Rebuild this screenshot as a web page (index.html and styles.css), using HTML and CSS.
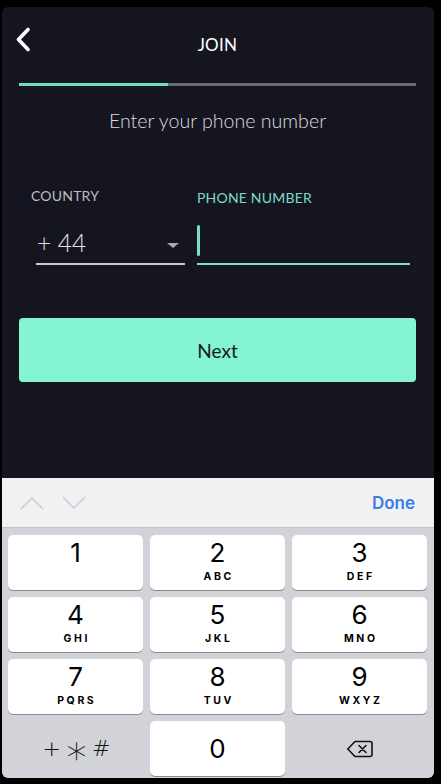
FILE: index.html
```html
<!DOCTYPE html>
<html>
<head>
<meta charset="utf-8">
<link rel="stylesheet" href="styles.css">
</head>
<body>
<div class="screen">
  <div class="content">
    <header class="header">
      <button class="back" aria-label="Back">
        <svg width="16" height="26" viewBox="0 0 16 26"><polyline points="12,2.5 2.5,12.5 12,22.5" fill="none" stroke="#fff" stroke-width="3.6" stroke-linecap="round" stroke-linejoin="round"/></svg>
      </button>
      <h1 class="title">JOIN</h1>
    </header>
    <div class="progress"><div class="progress-fill"></div></div>
    <p class="subtitle">Enter your phone number</p>
    <div class="fields">
      <div class="field country">
        <div class="label">COUNTRY</div>
        <div class="input country-input">
          <span class="code">+ 44</span>
          <span class="caret-down"></span>
        </div>
      </div>
      <div class="field phone">
        <div class="label active">PHONE NUMBER</div>
        <div class="input phone-input"><span class="cursor"></span></div>
      </div>
    </div>
    <button class="next">Next</button>
  </div>
  <div class="keyboard">
    <div class="accessory">
      <div class="arrows">
        <svg width="24" height="14" viewBox="0 0 24 14"><polyline points="1,13 12,2 23,13" fill="none" stroke="#c9c9ce" stroke-width="1.4"/></svg>
        <svg width="24" height="14" viewBox="0 0 24 14"><polyline points="1,1 12,12 23,1" fill="none" stroke="#c9c9ce" stroke-width="1.4"/></svg>
      </div>
      <span class="done">Done</span>
    </div>
    <div class="keypad">
      <div class="key"><span class="digit">1</span><span class="letters">&nbsp;</span></div>
      <div class="key"><span class="digit">2</span><span class="letters">ABC</span></div>
      <div class="key"><span class="digit">3</span><span class="letters">DEF</span></div>
      <div class="key"><span class="digit">4</span><span class="letters">GHI</span></div>
      <div class="key"><span class="digit">5</span><span class="letters">JKL</span></div>
      <div class="key"><span class="digit">6</span><span class="letters">MNO</span></div>
      <div class="key"><span class="digit">7</span><span class="letters">PQRS</span></div>
      <div class="key"><span class="digit">8</span><span class="letters">TUV</span></div>
      <div class="key"><span class="digit">9</span><span class="letters">WXYZ</span></div>
      <div class="key plain"><span class="symbols"><span>+</span><span class="star">∗</span><span>#</span></span></div>
      <div class="key zero"><span class="digit">0</span></div>
      <div class="key plain">
        <svg width="28" height="20" viewBox="0 0 28 20"><path d="M9 2.5 H24 a2 2 0 0 1 2 2 V15.5 a2 2 0 0 1 -2 2 H9 L1.8 10 Z" fill="none" stroke="#111" stroke-width="1.6" stroke-linejoin="round"/><path d="M13 6.5 L20 13.5 M20 6.5 L13 13.5" stroke="#111" stroke-width="1.6" stroke-linecap="round"/></svg>
      </div>
    </div>
  </div>
</div>
</body>
</html>
```

FILE: styles.css
```css
* { box-sizing: border-box; }
html, body { margin: 0; padding: 0; background: #000; }
body { width: 441px; height: 784px; overflow: hidden; }

.screen {
  margin: 7px 7px 0 2px;
  width: 432px;
  height: 771px;
  background: #151520;
  border-radius: 6px;
  overflow: hidden;
  display: flex;
  flex-direction: column;
  font-family: Lato, "Open Sans", sans-serif;
}

.content { padding: 0 18px 0 17px; display: flex; flex-direction: column; }

.header {
  position: relative;
  height: 75px;
  display: flex;
  align-items: center;
  justify-content: center;
}
.back {
  position: absolute;
  left: -3px;
  top: 20px;
  background: none;
  border: 0;
  padding: 0;
  width: 16px;
  height: 26px;
}
.back svg { display: block; }
.title {
  margin: 0;
  color: #fff;
  font-size: 17px;
  font-weight: 400;
  letter-spacing: 0.3px;
}

.progress { height: 3px; background: #6b6b72; margin-top: 1px; }
.progress-fill { width: 149px; height: 3px; background: #73dcc4; }

.subtitle {
  margin: 23px 0 0;
  text-align: center;
  color: #dcdce0;
  font-size: 19.6px;
  font-weight: 300;
  line-height: 24px;
}

.fields {
  margin-top: 54px;
  display: grid;
  grid-template-columns: 154px 213px;
  column-gap: 12px;
  padding-left: 12px;
}
.label {
  font-size: 14px;
  line-height: 18px;
  color: #bdbdc2;
  letter-spacing: 0.2px;
}
.label.active { color: #7ddcc6; margin-top: 2px; }
.input {
  margin-top: 18px;
  height: 42px;
  border-bottom: 2px solid #c8c8cc;
  display: flex;
  align-items: center;
}
.country-input { margin-left: 5px; width: 149px; justify-content: space-between; padding-right: 6px; }
.phone .input { margin-top: 16px; border-bottom-color: #7ddcc6; }
.code {
  color: #e4e4e8;
  font-size: 24.5px;
  font-weight: 300;
  margin-left: 1px;
  margin-top: -2px;
}
.caret-down {
  width: 0; height: 0;
  border-left: 6px solid transparent;
  border-right: 6px solid transparent;
  border-top: 5px solid #a9a9ae;
  margin-top: 4px;
}
.cursor {
  width: 3px;
  height: 31px;
  border-radius: 2px;
  background: #7ddcc6;
  margin-top: -5px;
}

.next {
  margin-top: 53px;
  height: 64px;
  border: 0;
  border-radius: 4px;
  background: #84f4d3;
  color: #17181f;
  font-family: Lato, "Open Sans", sans-serif;
  font-size: 19px;
  font-weight: 400;
}

.keyboard { margin-top: auto; height: 300px; display: flex; flex-direction: column; }
.accessory {
  height: 50px;
  background: #f1f1f3;
  display: flex;
  align-items: center;
  justify-content: space-between;
  padding: 0 19px 0 18px;
  border-bottom: 1px solid #c2c4c8;
}
.arrows { display: flex; gap: 18px; }
.arrows svg { display: block; }
.done {
  color: #3a7ee6;
  font-family: Inter, "Liberation Sans", sans-serif;
  font-size: 17px;
  font-weight: 600;
}

.keypad {
  flex: 1;
  background: #d1d3d9;
  display: grid;
  grid-template-columns: repeat(3, 135px);
  grid-auto-rows: 55px;
  gap: 7px;
  padding: 7px 7px 0 6px;
}
.key {
  background: #fff;
  border-radius: 5px;
  box-shadow: 0 1px 0 #8b8d92;
  display: flex;
  flex-direction: column;
  align-items: center;
  font-family: Inter, "Liberation Sans", sans-serif;
  color: #000;
}
.digit { font-size: 26px; line-height: 30px; margin-top: 3px; font-weight: 400; }
.letters { font-size: 10.5px; line-height: 12px; font-weight: 700; letter-spacing: 2.6px; margin-left: 2.6px; margin-top: 3px; }
.key.zero { justify-content: center; }
.key.zero .digit { margin-top: 0; }
.key.plain { background: transparent; box-shadow: none; justify-content: center; }
.symbols {
  display: flex;
  align-items: center;
  gap: 3px;
  font-family: "DejaVu Sans", sans-serif;
  font-size: 22px;
  line-height: 26px;
  font-weight: 300;
  color: #111;
  margin-left: 2px;
}
.star { font-size: 40px; line-height: 26px; margin-top: 2px; }
```
